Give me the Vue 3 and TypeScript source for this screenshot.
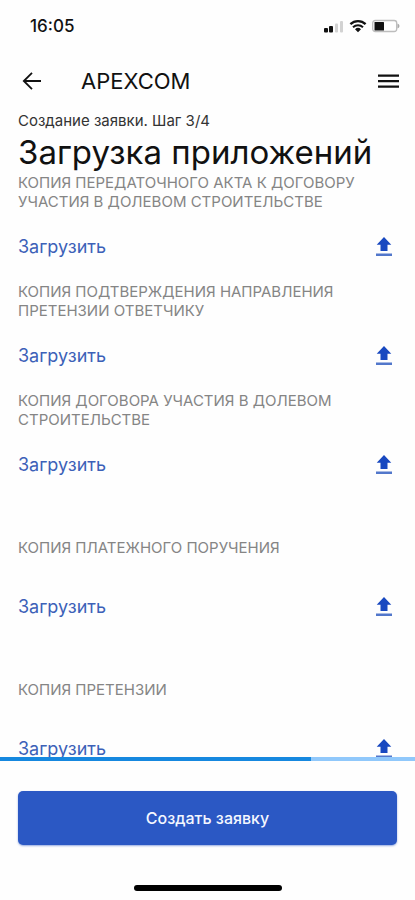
<script setup lang="ts">
import { ref } from 'vue'

interface DocumentItem {
  id: string
  title: string
  spaced: boolean
}

const step = ref<number>(3)
const totalSteps = 4

const documents: DocumentItem[] = [
  { id: 'act', title: 'Копия передаточного акта к договору участия в долевом строительстве', spaced: false },
  { id: 'notice', title: 'Копия подтверждения направления претензии ответчику', spaced: false },
  { id: 'contract', title: 'Копия договора участия в долевом строительстве', spaced: false },
  { id: 'payment', title: 'Копия платежного поручения', spaced: true },
  { id: 'claim', title: 'Копия претензии', spaced: true },
]
</script>

<template>
  <div class="screen">
    <div class="status">
      <span class="time">16:05</span>
      <div class="indicators">
        <svg width="20" height="14" viewBox="0 0 20 14" aria-hidden="true">
          <rect x="0" y="9" width="4" height="4.500" rx="1" fill="#111" />
          <rect x="5" y="7" width="4" height="6.500" rx="1" fill="#111" />
          <rect x="11" y="4.500" width="3" height="9" rx="1" fill="#d2d2d2" />
          <rect x="16" y="2" width="3" height="11.500" rx="1" fill="#d2d2d2" />
        </svg>
        <svg width="18" height="14" viewBox="0 0 18 14" aria-hidden="true">
          <path d="M1.400 5.200a11 11 0 0 1 15.200 0" fill="none" stroke="#111" stroke-width="2.300" />
          <path d="M4 8.200a7.300 7.300 0 0 1 10 0" fill="none" stroke="#111" stroke-width="2" />
          <path d="M9 13.200L6 10.300a4.300 4.300 0 0 1 6 0z" fill="#111" />
        </svg>
        <svg width="28" height="14" viewBox="0 0 28 14" aria-hidden="true">
          <rect x="0.700" y="1.500" width="24" height="11" rx="2.500" fill="#fff" stroke="#bdbdbd" stroke-width="1.300" />
          <rect x="2.500" y="3" width="9.500" height="8.500" rx="0.500" fill="#111" />
          <path d="M25.500 4.500q2 .8 2 2.500t-2 2.500z" fill="#aaa" />
        </svg>
      </div>
    </div>

    <header class="bar">
      <button class="icon-button" type="button" aria-label="Назад">
        <svg width="22" height="20" viewBox="0 0 22 20" fill="none" stroke="#111" stroke-width="1.800">
          <path d="M21 10H4M12 1.800L3.800 10l8.200 8.200" />
        </svg>
      </button>
      <span class="brand">APEXCOM</span>
      <button class="icon-button" type="button" aria-label="Меню">
        <svg width="21" height="16" viewBox="0 0 21 16" fill="#111">
          <path d="M0 1.500h21v2.300H0zM0 7h21v2.300H0zM0 12.500h21v2.300H0z" />
        </svg>
      </button>
    </header>

    <main class="content">
      <p class="step">Создание заявки. Шаг {{ step }}/{{ totalSteps }}</p>
      <h1 class="title">Загрузка приложений</h1>
      <ul class="documents">
        <li v-for="item in documents" :key="item.id" class="document" :class="{ spaced: item.spaced }">
          <h2 :id="item.id" class="label">{{ item.title }}</h2>
          <button class="upload" type="button" :aria-describedby="item.id">
            <span>Загрузить</span>
            <svg width="16" height="20" viewBox="0 0 16 20" aria-hidden="true">
              <path d="M8 0l7.300 7.700H11.500V14H4.500V7.700H.7z" fill="#1848c0" />
              <path d="M0 16.500h16V19H0z" fill="#5277cb" />
            </svg>
          </button>
        </li>
      </ul>
    </main>

    <footer class="footer">
      <div class="track" role="progressbar" aria-label="Создание заявки" aria-valuemin="0" :aria-valuemax="totalSteps" :aria-valuenow="step">
        <div class="progress" :style="{ width: `${(step / totalSteps) * 100}%` }"></div>
      </div>
      <button class="submit" type="button">Создать заявку</button>
      <div class="home"></div>
    </footer>
  </div>
</template>

<style>
body {
  background: #fefefe;
}
</style>

<style scoped>
.screen {
  display: flex;
  flex-direction: column;
  height: 100vh;
  overflow: hidden;
  background: #fefefe;
  color: #111;
  font-family: Inter, Roboto, sans-serif;
}

button {
  padding: 0;
  border: 0;
  background: none;
  color: inherit;
  font: inherit;
  cursor: pointer;
}

svg {
  display: block;
  flex: none;
}

.status {
  display: flex;
  align-items: center;
  justify-content: space-between;
  flex: none;
  height: 52px;
  padding: 0 15px 0 30px;
}

.time {
  font-size: 17px;
  font-weight: 500;
}

.indicators {
  display: flex;
  align-items: center;
  gap: 5px;
}

.bar {
  display: flex;
  align-items: center;
  flex: none;
  height: 58px;
  padding: 0 16px 0 20px;
}

.icon-button {
  display: flex;
  align-items: center;
  height: 40px;
}

.brand {
  flex: 1;
  padding-left: 39px;
  font-size: 22px;
  font-weight: 400;
}

.content {
  flex: 1;
  min-height: 0;
  overflow: hidden;
  padding: 0 18px;
}

.step {
  margin: 0;
  font-size: 15px;
  line-height: 21px;
  color: #333;
}

.title {
  margin: 0;
  font-size: 33px;
  font-weight: 400;
  line-height: 42px;
  white-space: nowrap;
}

.documents {
  display: flex;
  flex-direction: column;
  gap: 16px;
  margin: 0;
  padding: 0;
  list-style: none;
}

.document {
  display: flex;
  flex-direction: column;
  gap: 16px;
}

.spaced {
  gap: 30px;
  padding-top: 38px;
}

.label {
  margin: 0;
  font-size: 15px;
  font-weight: 400;
  line-height: 19px;
  color: #858585;
  text-transform: uppercase;
}

.upload {
  display: flex;
  align-items: center;
  justify-content: space-between;
  height: 39px;
  padding-right: 5px;
  font-size: 18px;
  color: #3c61b8;
}

.footer {
  flex: none;
}

.track {
  height: 4px;
  background: #90c8fb;
}

.progress {
  height: 100%;
  background: #1688df;
}

.submit {
  display: block;
  width: calc(100% - 36px);
  height: 54px;
  margin: 30px 18px 40px;
  border-radius: 5px;
  background: #2b58c4;
  box-shadow: 0 1px 2px #2b58c480;
  color: #f4f7ff;
  font-size: 16px;
  font-weight: 500;
}

.home {
  width: 148px;
  height: 6px;
  margin: 0 auto 9px;
  border-radius: 3px;
  background: #000;
}
</style>
